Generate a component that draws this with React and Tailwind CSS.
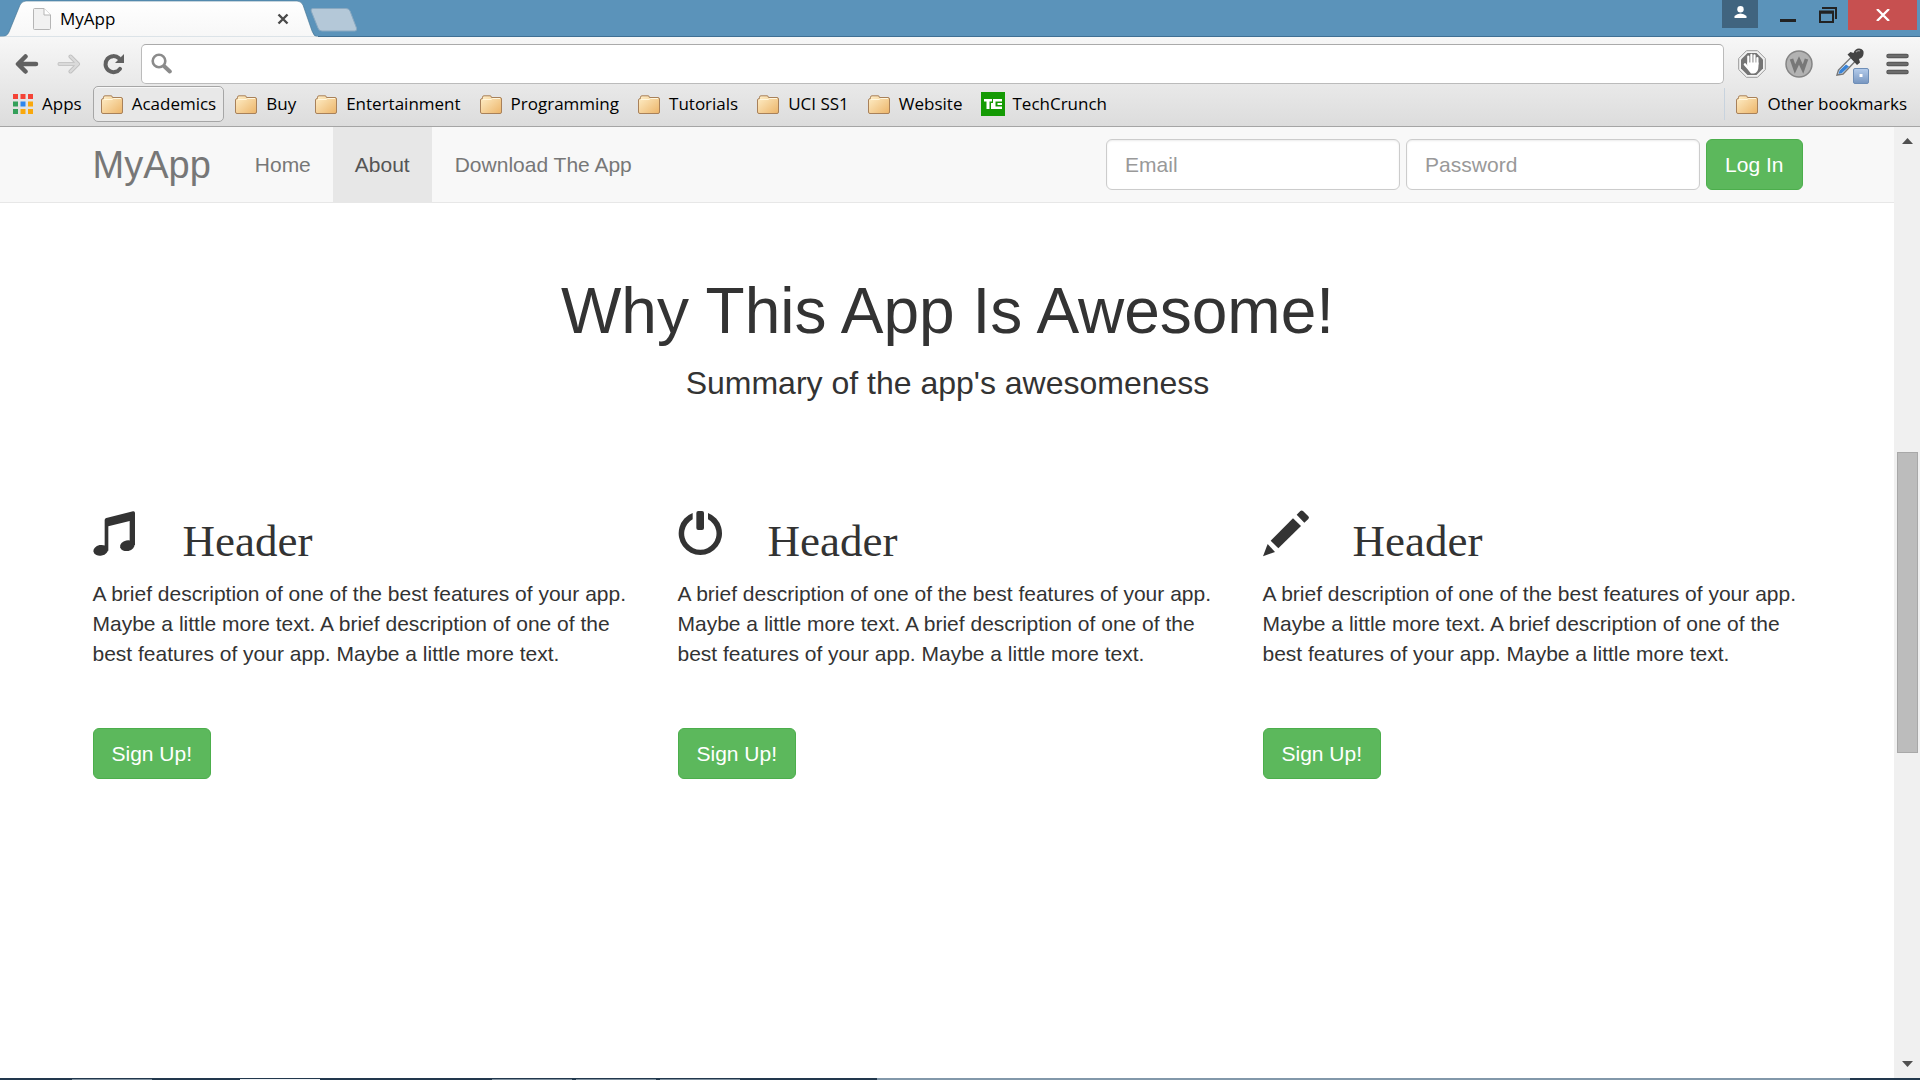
import React from "react";

const FOLDERS = ["Academics", "Buy", "Entertainment", "Programming", "Tutorials", "UCI SS1", "Website"];

const DESCRIPTION =
  "A brief description of one of the best features of your app. Maybe a little more text. A brief description of one of the best features of your app. Maybe a little more text.";

function FolderIcon() {
  return (
    <svg width="22" height="19" viewBox="0 0 22 19" className="shrink-0" aria-hidden="true">
      <defs>
        <linearGradient id="folder" x1="0" y1="0" x2="1" y2="1">
          <stop offset="0" stopColor="#fff0cb" />
          <stop offset="1" stopColor="#ecb468" />
        </linearGradient>
      </defs>
      <path
        d="M2.5 3.5V2.2Q2.5 .8 4 .8H10Q11.3 .8 11.4 2.2V2.5H20Q21.5 2.5 21.5 4V17Q21.5 18.5 20 18.5H2Q.5 18.5 .5 17V5Q.5 3.5 2.5 3.5Z"
        fill="url(#folder)"
        stroke="#a8815a"
      />
      <path d="M3 4.5H11L12.500 3.500H20" fill="none" stroke="#fff6dd" />
    </svg>
  );
}

function AppsIcon() {
  const colors = ["#f44336", "#f44336", "#f44336", "#34a05a", "#2f86ec", "#f9a80c", "#34a05a", "#f9a80c", "#f9a80c"];
  return (
    <svg width="20" height="20" viewBox="0 0 20 20" aria-hidden="true">
      {colors.map((c, i) => (
        <rect key={i} x={(i % 3) * 7.5} y={Math.floor(i / 3) * 7.5} width="5" height="5" fill={c} />
      ))}
    </svg>
  );
}

function TitleBar() {
  return (
    <header className="flex h-[37px] shrink-0 items-start bg-[#5b93ba] shadow-[inset_0_-1px_0_#3f6f93]">
      <div className="relative flex h-[37px] w-[318px] items-center pl-[33px] pr-[29px]">
        <svg className="absolute inset-0" width="318" height="37" viewBox="0 0 318 37" aria-hidden="true">
          <defs>
            <linearGradient id="tab" x1="0" y1="0" x2="0" y2="1">
              <stop offset="0" stopColor="#ffffff" />
              <stop offset="1" stopColor="#f7f7f7" />
            </linearGradient>
          </defs>
          <path
            d="M0 37Q7 37 9 32L20 5Q22 1 26 1H297Q301 1 303 5L312 31Q314 37 318 37Z"
            fill="url(#tab)"
            stroke="#41718f"
            strokeOpacity=".6"
          />
          <path d="M0 36.500H318V37H0Z" fill="#f7f7f7" />
        </svg>
        <svg className="relative" width="18" height="22" viewBox="0 0 18 22" aria-hidden="true">
          <path d="M1.500.5H11L17.500 7V20.500Q17.500 21.500 16.500 21.500H1.500Q.5 21.500 .5 20.500V1.500Q.5.5 1.500.5Z" fill="#f1f1f1" stroke="#b5b5b5" />
          <path d="M11 .5V7H17.500" fill="#fff" stroke="#b5b5b5" />
        </svg>
        <span className="relative ml-[9px] grow text-[17px] leading-6">MyApp</span>
        <button aria-label="Close tab" className="relative">
          <svg width="12" height="12" viewBox="0 0 12 12">
            <path d="M1.500 1.500L10.500 10.500M10.500 1.500L1.500 10.500" stroke="#4a4a4a" strokeWidth="2.400" />
          </svg>
        </button>
      </div>
      <button aria-label="New tab" className="-ml-2 mt-2">
        <svg width="48" height="24" viewBox="0 0 48 24">
          <path d="M3 .5H36Q39 .5 40 3L46.500 20Q47 23 45 23H12Q9 23 8 20L1.200 3Q.5.5 3 .5Z" fill="#b4c8d8" stroke="#8aa9c1" />
        </svg>
      </button>
      <div className="grow" />
      <button aria-label="User" className="flex h-7 w-9 justify-center bg-[#40647f] pt-[6px]">
        <svg width="13" height="13" viewBox="0 0 13 13" fill="#fff">
          <circle cx="6.500" cy="3.200" r="3.200" />
          <path d="M.5 12V10Q3 7.500 6.500 7.500T12.500 10V12Z" />
        </svg>
      </button>
      <button aria-label="Minimize" className="ml-[22px] mt-[19px]">
        <span className="block h-[3px] w-4 bg-[#222]" />
      </button>
      <button aria-label="Restore" className="ml-[23px] mt-[7px]">
        <svg width="18" height="16" viewBox="0 0 18 16" fill="none" stroke="#222">
          <path d="M3 1H17V12" strokeWidth="2" />
          <path d="M1 5.500H14V15H1Z" strokeWidth="2" />
          <path d="M0 5H15" strokeWidth="3" />
        </svg>
      </button>
      <button aria-label="Close" className="ml-[11px] mr-[3px] flex h-[30px] w-[69px] items-center justify-center bg-[#c75050]">
        <svg width="14" height="12" viewBox="0 0 14 12">
          <path d="M1 0L13 12M13 0L1 12" stroke="#fff" strokeWidth="2.300" />
        </svg>
      </button>
    </header>
  );
}

function Toolbar() {
  return (
    <div className="flex h-[47px] shrink-0 items-center pl-[15px] pr-[11px] pt-[6px]">
      <button aria-label="Back">
        <svg width="24" height="20" viewBox="0 0 24 20" fill="none" stroke="#616161" strokeWidth="4.500" strokeLinecap="round" strokeLinejoin="round">
          <path d="M21 10H4M10.500 2.500L3 10L10.500 17.500" />
        </svg>
      </button>
      <button aria-label="Forward" className="ml-[18px]">
        <svg width="24" height="20" viewBox="0 0 24 20" fill="none" strokeLinecap="round" strokeLinejoin="round">
          <path d="M2.500 10H20M13.500 2.500L21 10L13.500 17.500" stroke="#c0c0c0" strokeWidth="4" />
          <path d="M2.500 10H20M13.500 2.500L21 10L13.500 17.500" stroke="#dadada" strokeWidth="2.300" />
        </svg>
      </button>
      <button aria-label="Reload" className="ml-[22px]">
        <svg width="22" height="22" viewBox="0 0 22 22" fill="none">
          <path d="M17 15.800A8 8 0 1 1 16 5.300" stroke="#616161" strokeWidth="4" strokeLinecap="round" />
          <path d="M21 1V10H12Z" fill="#616161" />
        </svg>
      </button>
      <label className="ml-4 flex h-10 grow items-center rounded-[5px] border border-[#bbb] border-t-[#aaa] bg-white pl-[9px]">
        <svg width="21" height="21" viewBox="0 0 21 21" fill="none" stroke="#8b8b8b" strokeLinecap="round" aria-hidden="true">
          <circle cx="8" cy="8" r="6.300" strokeWidth="2.600" />
          <path d="M13.500 13.500L18.800 18.500" strokeWidth="4" />
        </svg>
        <input aria-label="Address" className="ml-2 h-full min-w-0 grow bg-transparent text-[17px] outline-none" />
      </label>
      <button aria-label="Content blocker" className="ml-[14px]">
        <svg width="28" height="28" viewBox="0 0 28 28">
          <path d="M8.500 .7H19.500L27.300 8.500V19.500L19.500 27.300H8.500L.7 19.500V8.500Z" fill="#f2f2f2" stroke="#999" />
          <path d="M9.500 3H18.500L25 9.500V18.500L18.500 25H9.500L3 18.500V9.500Z" fill="#757575" />
          <g stroke="#fff" strokeWidth="2.200" strokeLinecap="round" fill="none">
            <path d="M10.300 14V6.500M13.400 13V4.800M16.500 13V5.300M19.400 14V8" />
            <path d="M7 14.500L11 19" strokeWidth="2.600" />
          </g>
          <path d="M9.300 12.500H20.500V16Q20.500 22.500 16 23.500H13Q10.500 21.500 9.300 17Z" fill="#fff" />
        </svg>
      </button>
      <button aria-label="Web extension" className="ml-[19px]">
        <svg width="28" height="28" viewBox="0 0 28 28">
          <circle cx="14" cy="14" r="13" fill="#b2b2b2" stroke="#858585" strokeWidth="1.500" />
          <path d="M6.500 9L10 19L14 10.500L18 19L21.500 9" fill="none" stroke="#777" strokeWidth="3.600" />
        </svg>
      </button>
      <button aria-label="Color picker" className="ml-[22px] mt-[6px]">
        <svg width="36" height="38" viewBox="0 0 36 38">
          <defs>
            <linearGradient id="badge" x1="0" y1="0" x2="0" y2="1">
              <stop offset="0" stopColor="#b5cdec" />
              <stop offset="1" stopColor="#7796c0" />
            </linearGradient>
          </defs>
          <path d="M2 27L3.500 22L16 9.500L20 13.500L8 26Z" fill="#eef3f8" stroke="#777" strokeWidth="1.400" />
          <path d="M3.500 26L4.500 22.500L11 16.500L14 18.500L7 25Z" fill="#3883d7" />
          <path d="M12.500 6.500L15.500 4L18.500 5Q20 .5 24 .5Q29.500 1 28.500 6Q28 10 24 11L25 14.500L22 17Z" fill="#444" />
          <path d="M21 4Q23 2 25 3" stroke="#999" strokeWidth="1.300" fill="none" />
          <rect x="18.500" y="20.500" width="15" height="15" rx="1.500" fill="url(#badge)" stroke="#6f8fb8" />
          <rect x="24.500" y="26" width="3" height="3" fill="#fff" />
        </svg>
      </button>
      <button aria-label="Menu" className="ml-[15px]">
        <svg width="23" height="22" viewBox="0 0 23 22" stroke="#555" strokeWidth="4.500" strokeLinecap="round">
          <path d="M2.500 3H20.500M2.500 11H20.500M2.500 19H20.500" />
          <path d="M2.500 3H20.500M2.500 11H20.500M2.500 19H20.500" stroke="#6c6c6c" strokeWidth="2.500" />
        </svg>
      </button>
    </div>
  );
}

function BookmarksBar() {
  return (
    <nav aria-label="Bookmarks" className="flex h-[43px] shrink-0 items-center border-b border-[#a5a5a5] pb-[2px] pl-[13px] pr-[13px] text-[17px] leading-6 whitespace-nowrap">
      <a href="#apps" className="mr-[11px] flex items-center gap-[9px]">
        <AppsIcon />
        Apps
      </a>
      {FOLDERS.map((name, i) => (
        <button
          key={name}
          className={
            i === 0
              ? "flex h-9 items-center gap-[9px] rounded-[5px] border border-[#a6a6a6] bg-[#e8e8e8] px-[7px] shadow-[inset_0_1px_0_#f8f8f8]"
              : "ml-[3px] flex h-9 items-center gap-[9px] px-2"
          }
        >
          <FolderIcon />
          {name}
        </button>
      ))}
      <a href="#techcrunch" className="ml-[3px] flex items-center gap-[7px] px-2">
        <svg width="24" height="24" viewBox="0 0 24 24" aria-hidden="true">
          <path d="M0 0H24V24H0Z" fill="#149a04" />
          <path d="M3 7H11V9.500H8.500V17H5.500V9.500H3ZM12 7H21V9.500H14.500V14.500H21V17H10V11H12ZM16.500 11H21V13H16.500Z" fill="#fff" />
        </svg>
        TechCrunch
      </a>
      <div className="grow" />
      <div className="h-8 w-px bg-[#c8d3de]" />
      <button className="ml-[11px] flex items-center gap-[9px]">
        <FolderIcon />
        Other bookmarks
      </button>
    </nav>
  );
}

function SiteNav() {
  const field =
    "h-[51px] w-[294px] rounded-md border border-[#ccc] bg-white px-[18px] text-[21px] shadow-[inset_0_1px_2px_rgba(0,0,0,0.08)] outline-none placeholder:text-[#999]";
  return (
    <nav aria-label="Site" className="border-b border-[#e7e7e7] bg-[#f8f8f8]">
      <div className="mx-auto flex h-[75px] w-full max-w-[1755px] items-center pl-[23px] pr-[22px] text-[#777]">
        <a href="#top" className="mr-[22px] text-[38px] leading-[38px]">MyApp</a>
        <a href="#home" className="flex h-full items-center px-[22px]">Home</a>
        <a href="#about" aria-current="page" className="flex h-full items-center bg-[#e7e7e7] px-[22px] text-[#555]">About</a>
        <a href="#download" className="flex h-full items-center px-[23px]">Download The App</a>
        <form className="ml-auto flex gap-[6px]" onSubmit={(e) => e.preventDefault()}>
          <input type="email" aria-label="Email" placeholder="Email" className={field} />
          <input type="password" aria-label="Password" placeholder="Password" className={field} />
          <button className="h-[51px] rounded-md border border-[#4cae4c] bg-[#5cb85c] px-[18px] text-white">Log In</button>
        </form>
      </div>
    </nav>
  );
}

function MusicIcon() {
  return (
    <svg width="45" height="47" viewBox="98 60 135 141" fill="#333" aria-hidden="true">
      <path d="M133 90Q133 85 138 84L218 64Q224 63 224 69V165H208V93L144 109V182H133Z" />
      <ellipse cx="121" cy="181" rx="22" ry="16" transform="rotate(-12 121 181)" />
      <ellipse cx="201" cy="167" rx="22" ry="16" transform="rotate(-12 201 167)" />
    </svg>
  );
}

function PowerIcon() {
  return (
    <svg width="45" height="47" viewBox="53 60 135 141" aria-hidden="true">
      <path d="M97 69V88A48.500 48.500 0 1 0 143 88V69A65 65 0 1 1 97 69Z" fill="#333" />
      <rect x="108" y="63" width="23" height="57" rx="6" fill="#333" />
    </svg>
  );
}

function PencilIcon() {
  return (
    <svg width="48" height="47" viewBox="66 60 144 141" fill="#333" aria-hidden="true">
      <path d="M178 63Q182 60 186 63L202 79Q206 83 202 87L190 98L167 74Z" />
      <path d="M156 85L180 108L112 175L89 152Z" />
      <path d="M80 162L102 186L66 199Z" />
    </svg>
  );
}

function Feature({ icon }) {
  return (
    <article className="flex flex-col items-start">
      <div className="flex h-[62px] w-full items-start">
        <div className="w-[90px] pt-1">{icon}</div>
        <h2 className="pt-[10px] font-['Liberation_Serif',serif] text-[45px] leading-[50px]">Header</h2>
      </div>
      <p className="mt-[11px] leading-[30px]">{DESCRIPTION}</p>
      <button className="mt-[59px] h-[51px] rounded-md border border-[#4cae4c] bg-[#5cb85c] px-[18px] text-white">Sign Up!</button>
    </article>
  );
}

function Scrollbar() {
  return (
    <div className="flex w-[26px] shrink-0 flex-col items-center justify-between bg-[#f0f0f0] py-[11px]" aria-hidden="true">
      <svg width="11" height="6" viewBox="0 0 11 6"><path d="M5.500 0L11 6H0Z" fill="#505050" /></svg>
      <div className="h-[301px] w-[21px] border border-[#a8a8a8] bg-[#bcbcbc]" />
      <svg width="11" height="6" viewBox="0 0 11 6"><path d="M5.500 6L11 0H0Z" fill="#505050" /></svg>
    </div>
  );
}

function Taskbar() {
  return (
    <div className="flex h-[2px] shrink-0 items-end bg-[#22384d]" aria-hidden="true">
      <span className="ml-[72px] h-px w-20 bg-[#7f909e]" />
      <span className="ml-[88px] h-px w-20 bg-[#f0f3f6]" />
      <span className="ml-[172px] h-px w-20 bg-[#7f909e]" />
      <span className="ml-1 h-px w-20 bg-[#7f909e]" />
      <span className="ml-1 h-px w-20 bg-[#7f909e]" />
      <span className="ml-[137px] mr-[70px] h-[2px] grow bg-[#8298aa]" />
    </div>
  );
}

export default function App() {
  return (
    <div className="flex h-screen flex-col overflow-hidden bg-white font-['Open_Sans','Noto_Sans',sans-serif] text-black">
      <TitleBar />
      <div className="flex shrink-0 flex-col bg-linear-to-b from-[#f7f7f7] to-[#dcdcdc]">
        <Toolbar />
        <BookmarksBar />
      </div>
      <div className="flex min-h-0 grow">
        <main className="min-w-0 grow font-['Liberation_Sans',Arial,sans-serif] text-[21px] text-[#333]">
          <SiteNav />
          <div className="mx-auto max-w-[1755px] pl-[23px] pr-[22px] pt-[72px]">
            <section className="text-center">
              <h1 className="text-[64px] leading-[72px]">Why This App Is Awesome!</h1>
              <p className="mt-[13px] text-[32px] leading-[46px]">Summary of the app's awesomeness</p>
            </section>
            <section className="mt-[100px] grid grid-cols-3 gap-[45px]">
              <Feature icon={<MusicIcon />} />
              <Feature icon={<PowerIcon />} />
              <Feature icon={<PencilIcon />} />
            </section>
          </div>
        </main>
        <Scrollbar />
      </div>
      <Taskbar />
    </div>
  );
}
